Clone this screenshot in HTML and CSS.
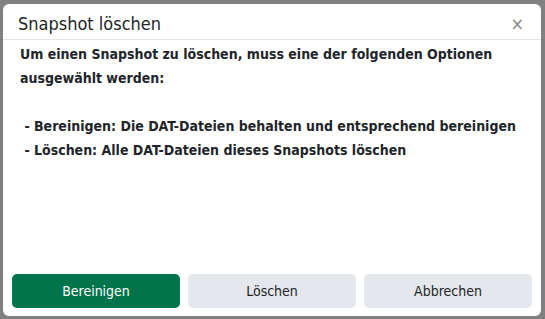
FILE: index.html
```html
<!DOCTYPE html>
<html lang="de">
<head>
    <meta charset="UTF-8">
    <title>Snapshot löschen</title>
    <link rel="stylesheet" href="styles.css">
</head>
<body>
    <div class="backdrop">
        <div class="modal">
            <div class="modal-header">
                <h2>Snapshot löschen</h2>
                <span class="close">&times;</span>
            </div>
            <div class="modal-body">
                <p>Um einen Snapshot zu löschen, muss eine der folgenden Optionen ausgewählt werden:</p>
                <p class="options">
                    &nbsp;- Bereinigen: Die DAT-Dateien behalten und entsprechend bereinigen<br>
                    &nbsp;- Löschen: Alle DAT-Dateien dieses Snapshots löschen
                </p>
            </div>
            <div class="modal-footer">
                <button class="btn btn-primary">Bereinigen</button>
                <button class="btn">Löschen</button>
                <button class="btn">Abbrechen</button>
            </div>
        </div>
    </div>
</body>
</html>
```

FILE: styles.css
```css
* {
    margin: 0;
    padding: 0;
    box-sizing: border-box;
}
body {
    background: #808080;
    font-family: "DejaVu Sans Condensed", "DejaVu Sans", sans-serif;
    color: #212529;
    width: 545px;
    height: 319px;
    overflow: hidden;
}
.backdrop {
    padding: 4px 4px 3px 3px;
    height: 100%;
}
.modal {
    background: #fff;
    border-radius: 6px;
    height: 100%;
    display: flex;
    flex-direction: column;
}
.modal-header {
    display: flex;
    align-items: center;
    justify-content: space-between;
    height: 36px;
    padding: 3px 17px 0 15px;
    border-bottom: 1px solid #e5e5e5;
}
.modal-header h2 {
    font-size: 18px;
    font-weight: normal;
}
.close {
    color: #8a8a8a;
    font-size: 18px;
}
.modal-body {
    flex: 1;
    padding: 2px 17px;
    font-size: 14px;
    font-weight: 600;
    line-height: 24px;
}
.options {
    margin-top: 24px;
}
.modal-footer {
    display: flex;
    gap: 8px;
    padding: 0 9px 8px 9px;
}
.btn {
    flex: 1;
    height: 34px;
    border: none;
    border-radius: 5px;
    background: #e4e7eb;
    color: #212529;
    font-family: inherit;
    font-size: 14px;
}
.btn-primary {
    background: #00744a;
    color: #fff;
}
```
